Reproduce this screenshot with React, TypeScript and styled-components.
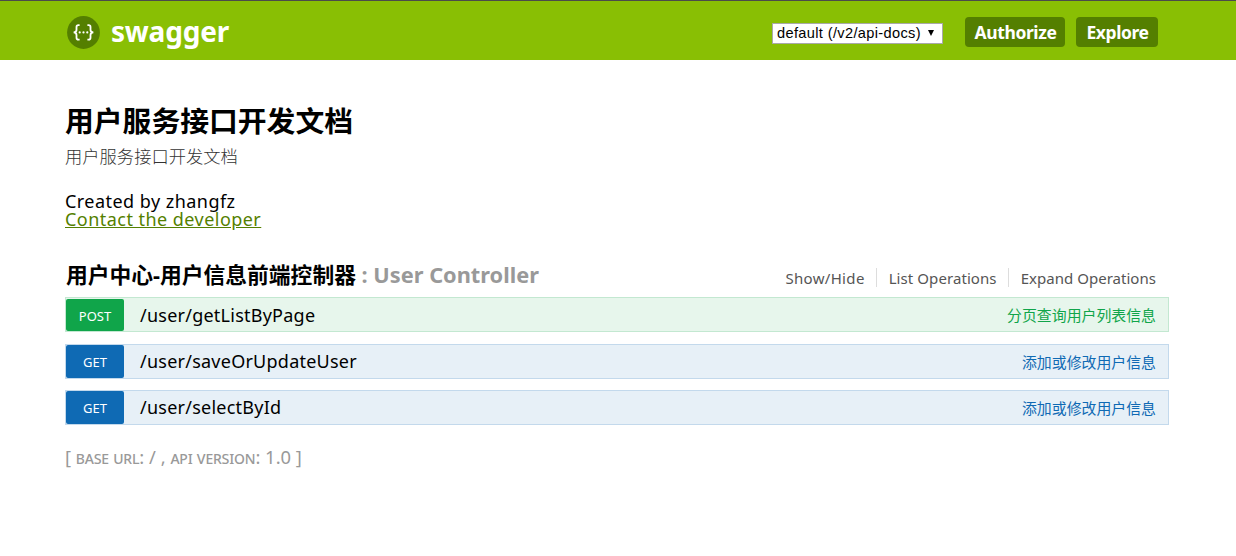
import React from "react";
import styled, { createGlobalStyle } from "styled-components";

const GlobalStyle = createGlobalStyle`
  * { box-sizing: border-box; }
  body {
    margin: 0;
    background: #fff;
    color: #000;
    font-family: "Noto Sans", "Noto Sans CJK SC", sans-serif;
  }
`;

const Header = styled.header`
  display: flex;
  align-items: center;
  height: 60px;
  padding: 3px 78px 0 67px;
  background: #89bf04;
  border-top: 1px solid #4b4b4b;
`;

const Brand = styled.a`
  display: flex;
  align-items: center;
  gap: 11px;
  margin-right: auto;
  color: #fff;
  font: 700 28px/32px "Noto Sans", sans-serif;
  letter-spacing: -0.2px;
`;

const BrandName = styled.span`
  padding-bottom: 3px;
`;

const Logo = styled.svg`
  display: block;
  width: 33px;
  height: 33px;
`;

const ApiSelect = styled.div`
  display: flex;
  align-items: center;
  justify-content: space-between;
  width: 171px;
  height: 21px;
  margin: 3px 22px 0 0;
  padding: 0 8px 0 4px;
  background: #fff;
  border: 1px solid #a9a9a9;
  color: #000;
  font: 14.6px/19px "Liberation Sans", sans-serif;
  letter-spacing: 0.35px;
  white-space: nowrap;
`;

const Caret = styled.svg`
  width: 6px;
  height: 6px;
  margin-top: -2px;
`;

const HeaderButton = styled.button<{ $width: number }>`
  width: ${(p) => p.$width}px;
  height: 30px;
  margin: 0;
  padding: 0 0 0 1px;
  border: 0;
  border-radius: 4px;
  background: #547f00;
  color: #fff;
  font: 700 17.5px/30px "Noto Sans", sans-serif;
  letter-spacing: -0.4px;
  & + & { margin-left: 11px; }
`;

const Page = styled.main`
  display: flex;
  flex-direction: column;
  width: 1104px;
  margin-left: 65px;
  padding-top: 41px;
`;

const Title = styled.h1`
  margin: 0;
  font-size: 28.8px;
  line-height: 40px;
  font-weight: 700;
`;

const Description = styled.p`
  margin: 4px 0 0;
  color: #333;
  font-size: 17.3px;
  line-height: 24px;
  font-weight: 300;
`;

const Contact = styled.div`
  display: flex;
  flex-direction: column;
  align-items: flex-start;
  margin-top: 23px;
  font-size: 18px;
  line-height: 18px;
  letter-spacing: 0.46px;
`;

const ContactLink = styled.a`
  color: #547f00;
  text-decoration: underline;
`;

const ResourceHead = styled.div`
  display: flex;
  align-items: center;
  justify-content: space-between;
  height: 36px;
  margin-top: 28px;
  padding: 0 12px 0 1px;
`;

const ResourceTitle = styled.h2`
  margin: 0;
  padding-top: 2px;
  font-size: 21.78px;
  line-height: 32px;
  font-weight: 700;
  white-space: nowrap;
`;

const Muted = styled.span`
  color: #999;
`;

const Options = styled.ul`
  display: flex;
  margin: 7px 0 0;
  padding: 0;
  list-style: none;
`;

const Option = styled.li<{ $spacing: number }>`
  height: 19px;
  color: #555;
  font-size: 15px;
  line-height: 21px;
  letter-spacing: ${(p) => p.$spacing}px;
  & + & {
    margin-left: 11px;
    padding-left: 12px;
    border-left: 1px solid #ddd;
  }
  &:last-child { margin-right: 1px; }
`;

type Method = "POST" | "GET";

const tones = {
  POST: { solid: "#10a54a", fill: "#e7f6ec", line: "#c3e8d1" },
  GET: { solid: "#0f6ab4", fill: "#e7f0f7", line: "#c3d9ec" },
};

const Operation = styled.div<{ $method: Method; $gap: number }>`
  display: flex;
  align-items: center;
  height: 35px;
  margin-top: ${(p) => p.$gap}px;
  padding-right: 12px;
  background: ${(p) => tones[p.$method].fill};
  border: 1px solid ${(p) => tones[p.$method].line};
  color: ${(p) => tones[p.$method].solid};
`;

const Badge = styled.span<{ $method: Method }>`
  width: 58px;
  height: ${(p) => (p.$method === "POST" ? 32 : 33)}px;
  align-self: flex-end;
  border-radius: 2px;
  background: ${(p) => tones[p.$method].solid};
  color: #fff;
  font-size: 13px;
  line-height: 35px;
  text-align: center;
`;

const Path = styled.span<{ $method: Method }>`
  margin-left: 16px;
  padding-top: ${(p) => (p.$method === "POST" ? 2 : 0)}px;
  color: #000;
  font-size: 18px;
  line-height: 31px;
  letter-spacing: 0.24px;
`;

const Summary = styled.span`
  margin-left: auto;
  padding-top: 2px;
  font-size: 14.9px;
  line-height: 31px;
`;

const Footer = styled.footer`
  margin-top: 20px;
  color: #999;
  font-size: 18.4px;
  line-height: 24px;
  white-space: pre;
`;

const Label = styled.span`
  font-size: 17.3px;
  font-variant: small-caps;
  letter-spacing: -0.18px;
`;

const operations: { method: Method; path: string; summary: string; gap: number }[] = [
  { method: "POST", path: "/user/getListByPage", summary: "分页查询用户列表信息", gap: 5 },
  { method: "GET", path: "/user/saveOrUpdateUser", summary: "添加或修改用户信息", gap: 12 },
  { method: "GET", path: "/user/selectById", summary: "添加或修改用户信息", gap: 11 },
];

export default function App() {
  return (
    <>
      <GlobalStyle />
      <Header>
        <Brand>
          <Logo viewBox="0 0 33 33">
            <circle cx="16.5" cy="16.5" r="16.4" fill="#547f00" />
            <g fill="none" stroke="#fff" strokeWidth="1.8">
              <path d="M12.6 9.1h-1.2q-1.9 0-1.9 1.9v2.9q0 2.2-2.8 2.5q2.8.3 2.8 2.5v2.9q0 1.9 1.9 1.9h1.2" />
              <path d="M20.4 9.1h1.2q1.9 0 1.9 1.9v2.9q0 2.2 2.8 2.5q-2.8.3-2.8 2.5v2.9q0 1.9-1.9 1.9h-1.2" />
            </g>
            <g fill="#fff">
              <circle cx="12.7" cy="16.4" r="1.1" />
              <circle cx="16.5" cy="16.4" r="1.1" />
              <circle cx="20.3" cy="16.4" r="1.1" />
            </g>
          </Logo>
          <BrandName>swagger</BrandName>
        </Brand>
        <ApiSelect>
          <span>default (/v2/api-docs)</span>
          <Caret viewBox="0 0 6 6">
            <path d="M0 0h6L3 6z" fill="#000" />
          </Caret>
        </ApiSelect>
        <HeaderButton $width={100}>Authorize</HeaderButton>
        <HeaderButton $width={82}>Explore</HeaderButton>
      </Header>
      <Page>
        <Title>用户服务接口开发文档</Title>
        <Description>用户服务接口开发文档</Description>
        <Contact>
          <span>Created by zhangfz</span>
          <ContactLink>Contact the developer</ContactLink>
        </Contact>
        <ResourceHead>
          <ResourceTitle>
            用户中心-用户信息前端控制器 <Muted>: User Controller</Muted>
          </ResourceTitle>
          <Options>
            <Option $spacing={0.33}>Show/Hide</Option>
            <Option $spacing={0.08}>List Operations</Option>
            <Option $spacing={0.03}>Expand Operations</Option>
          </Options>
        </ResourceHead>
        {operations.map((op) => (
          <Operation key={op.path} $method={op.method} $gap={op.gap}>
            <Badge $method={op.method}>{op.method}</Badge>
            <Path $method={op.method}>{op.path}</Path>
            <Summary>{op.summary}</Summary>
          </Operation>
        ))}
        <Footer>
          {"[ "}
          <Label>base url</Label>
          {": / , "}
          <Label>api version</Label>
          {": 1.0 ]"}
        </Footer>
      </Page>
    </>
  );
}
